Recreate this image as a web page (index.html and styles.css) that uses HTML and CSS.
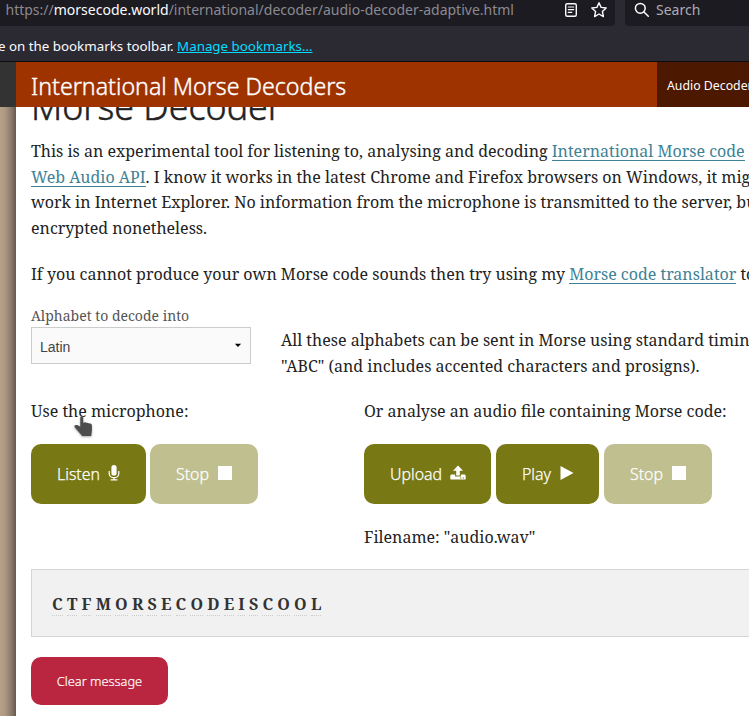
FILE: index.html
```html
<!DOCTYPE html>
<html lang="en">
<head>
<meta charset="utf-8">
<title>International Morse Decoders</title>
<link rel="stylesheet" href="styles.css">
</head>
<body>
<div class="browser">
  <div class="toolbar">
    <div class="address">
      <span class="url">https://<b>morsecode.world</b>/international/decoder/audio-decoder-adaptive.html</span>
      <svg class="reader" width="14" height="16" viewBox="0 0 14 16" fill="none" stroke="#fbfbfe" stroke-linecap="round"><rect x="1.7" y="1.7" width="10.6" height="12.6" rx="1.5" stroke-width="1.4"/><path d="M4.3 5h5.4M4.3 7.6h5.4M4.3 10.4h3.4" stroke-width="1.2"/></svg>
      <svg class="star" width="18" height="18" viewBox="0 0 18 18" fill="none" stroke="#fbfbfe" stroke-width="1.4" stroke-linejoin="round"><path d="M9 1.7l2.1 4.7 5.1.6-3.8 3.5 1 5.1L9 13l-4.4 2.6 1-5.1L1.8 7l5.1-.6z"/></svg>
    </div>
    <div class="search">
      <svg width="16" height="16" viewBox="0 0 16 16" fill="none" stroke="#fbfbfe" stroke-width="1.5" stroke-linecap="round"><circle cx="6.3" cy="6.3" r="4.9"/><path d="M10 10l4.3 4.3"/></svg>
      <span>Search</span>
    </div>
  </div>
  <div class="bookmarks"><span>e on the bookmarks toolbar. <a>Manage bookmarks…</a></span></div>
</div>
<header class="site-header">
  <div class="brand"><span>International Morse Decoders</span></div>
  <nav class="nav"><span>Audio Decoder</span></nav>
</header>
<div class="page">
<main class="content">
  <div class="title"><h1>Morse Decoder</h1></div>
  <p class="intro">
    <span class="line">This is an experimental tool for listening to, analysing and decoding <a>International Morse code</a></span>
    <span class="line"><a>Web Audio API</a>. I know it works in the latest Chrome and Firefox browsers on Windows, it might</span>
    <span class="line">work in Internet Explorer. No information from the microphone is transmitted to the server, but</span>
    <span class="line">encrypted nonetheless.</span>
  </p>
  <p class="hint"><span class="line">If you cannot produce your own Morse code sounds then try using my <a>Morse code translator</a> to</span></p>
  <section class="alphabet">
    <div class="field">
      <div class="label">Alphabet to decode into</div>
      <div class="select"><span>Latin</span><svg width="8" height="5" viewBox="0 0 8 5"><path d="M.9.8h6.2L4 3.9z" fill="#000"/></svg></div>
    </div>
    <p class="note">
      <span class="line">All these alphabets can be sent in Morse using standard timing</span>
      <span class="line">"ABC" (and includes accented characters and prosigns).</span>
    </p>
  </section>
  <section class="sources">
    <div class="mic">
      <p class="line">Use the microphone:</p>
      <div class="buttons">
        <button class="btn listen"><span>Listen</span><svg width="12" height="16" viewBox="0 0 12 16"><rect x="3.4" y="0" width="5.2" height="10.6" rx="2.6" fill="#fff"/><path d="M1.2 6v2.4a4.8 4.3 0 0 0 9.6 0V6M6 12.7v2M2.6 14.8h6.8" fill="none" stroke="#fff" stroke-width="1.2"/></svg></button>
        <button class="btn stop off"><span>Stop</span><i class="square"></i></button>
      </div>
      <svg class="pointer" width="22" height="25" viewBox="0 0 22 25"><path d="M7.3 3.6c0-1.8 2.9-1.8 2.9 0v5.2l1.3-.4c.8-.3 1.6 0 1.9.5.8-.4 1.8-.1 2.2.5 1.4-.2 3.3.6 3.3 2.2v5.2l-.7 5.2H9.2L1.9 13.4c-1-1.3-.3-2.2.9-2.4 1.4-.2 2.7.5 4.5 1.8z" fill="#4d4d4d"/></svg>
    </div>
    <div class="file">
      <p class="line">Or analyse an audio file containing Morse code:</p>
      <div class="buttons">
        <button class="btn upload"><span>Upload</span><svg width="16" height="16" viewBox="0 0 16 16"><path d="M8 .5l5 5.3H9.8v4.7H6.2V5.8H3z" fill="#fff"/><path d="M1.2 9.5h3.9v2h5.8v-2h3.9l.9 1.1v3.1c0 .6-.3.9-.9.9H1.2c-.6 0-.9-.3-.9-.9v-3.1z" fill="#fff"/><path d="M10.2 13h1.2M12.7 13h1.2" stroke="#787814"/></svg></button>
        <button class="btn play"><span>Play</span><svg width="14" height="16" viewBox="0 0 14 16"><path d="M.5 1L13.5 8 .5 15z" fill="#fff"/></svg></button>
        <button class="btn stop off"><span>Stop</span><i class="square"></i></button>
      </div>
      <p class="filename">Filename: "audio.wav"</p>
    </div>
  </section>
  <div class="output"><span>C</span><span>T</span><span>F</span><span>M</span><span>O</span><span>R</span><span>S</span><span>E</span><span>C</span><span>O</span><span>D</span><span>E</span><span>I</span><span>S</span><span>C</span><span>O</span><span>O</span><span>L</span></div>
  <button class="clear"><span>Clear message</span></button>
</main>
</div>
</body>
</html>
```
FILE: styles.css
```css
* { box-sizing: border-box; }
body { margin: 0; width: 749px; height: 716px; overflow: hidden; background: #fff; color: #222; font: 16px/25.6px "Noto Serif", "Droid Serif", "DejaVu Serif Condensed", serif; }
p, h1 { margin: 0; }
button { border: 0; margin: 0; }
.browser { height: 62px; background: #2b2a33; border-bottom: 1px solid #0c0c0d; font-family: "Noto Sans", sans-serif; overflow: hidden; }
.toolbar { display: flex; height: 26px; }
.address { width: 615px; background: #1c1b22; border-radius: 0 0 4px 0; padding-left: 5.5px; display: flex; align-items: flex-start; }
.url { width: 558.5px; font-size: 14px; line-height: 20px; color: #8b8a91; white-space: nowrap; }
.url b { font-weight: 400; color: #fbfbfe; }
.reader { margin-top: 2px; }
.star { margin: 1px 0 0 12px; }
.search { flex: 1; margin-left: 10px; padding: 0 0 0 9px; border-radius: 0 0 0 4px; background: #1c1b22; display: flex; font-size: 14px; line-height: 20px; color: #adacb3; }
.search svg { margin: 2px 6px 0 0; }
.bookmarks { height: 35px; padding-top: 10px; font-size: 13.33px; line-height: 20px; color: #fbfbfe; white-space: nowrap; }
.bookmarks span { margin-left: -2px; }
.bookmarks a { color: #00ddff; text-decoration: underline; }
.site-header { display: flex; height: 45px; background: #333; padding-left: 16px; font-family: "Noto Sans", sans-serif; }
.brand { width: 641px; padding-left: 15px; background: #9e3300; color: #fff; font-size: 23.2px; font-weight: 300; -webkit-text-stroke: .4px; line-height: 48px; white-space: nowrap; }
.nav { flex: 1; padding-left: 10px; background: #4c1800; color: #fff; font-size: 12.3px; line-height: 47px; white-space: nowrap; overflow: hidden; }
.page { height: 609px; padding-left: 16px; background: linear-gradient(90deg, #b6a087 0, #ad9882 5px, #8d7a6c 11px, #675950 16px, #675950 100%); }
.content { height: 609px; padding-left: 15px; background: #fff; overflow: hidden; }
.title { height: 32px; overflow: hidden; }
h1 { margin-top: -25px; font: 300 35.8px/48px "Noto Sans", sans-serif; -webkit-text-stroke: .5px; white-space: nowrap; }
.line { display: block; white-space: nowrap; }
.content a { color: #3e8295; text-decoration: none; background: linear-gradient(#3e8295, #3e8295) 0 calc(100% - 1px) / 100% 1px no-repeat; }
.hint { margin-top: 20.6px; }
.alphabet { display: flex; margin-top: 15px; height: 61px; }
.field { width: 220px; margin-right: 30px; flex: none; }
.label { height: 24px; color: #555; font-size: 14px; line-height: 26px; white-space: nowrap; }
.select { height: 37px; padding: 3px 8px 0 8px; display: flex; align-items: center; justify-content: space-between; border: 1px solid #ccc; background: #fafafa; color: #444; font: 14px "Liberation Sans", sans-serif; }
.select svg { margin-bottom: 2px; }
.note { padding-top: 24px; line-height: 26px; }
.sources { display: flex; height: 170px; margin-top: 35px; }
.mic { position: relative; width: 333px; }
.pointer { position: absolute; left: 42px; top: 15px; filter: drop-shadow(0 1px 1px #aaa); }
.buttons { display: flex; gap: 4px; margin-top: 19.4px; }
.file .buttons { gap: 5px; }
.btn { height: 60px; padding: 1px 0 0 26px; display: flex; align-items: center; border-radius: 10px; background: #787814; color: #fff; font: 300 15.9px "Noto Sans", sans-serif; -webkit-text-stroke: .25px; }
.btn svg, .square { margin-left: auto; margin-bottom: 2px; flex: none; }
.listen { width: 115px; padding-right: 26px; }
.stop { width: 108px; padding-right: 26px; }
.upload { width: 127px; padding-right: 25px; }
.play { width: 103px; padding-right: 25px; }
.off { background: #bfbf8f; }
.square { width: 14px; height: 14px; background: #fff; }
.filename { margin-top: 21px; }
.output { height: 68px; padding: 22px 0 0 20px; display: flex; gap: 4.2px; border: 1px solid #d5d5d5; border-right: 0; background: #f1f1f1; color: #333; font-weight: 700; }
.output span { height: 24px; border-bottom: 1px dotted #ccc; }
.clear { width: 137px; height: 48px; margin-top: 20px; padding: 1px 0 0; border-radius: 10px; background: #ba2640; color: #fff; font: 300 12.8px "Noto Sans", sans-serif; -webkit-text-stroke: .2px; }
```
